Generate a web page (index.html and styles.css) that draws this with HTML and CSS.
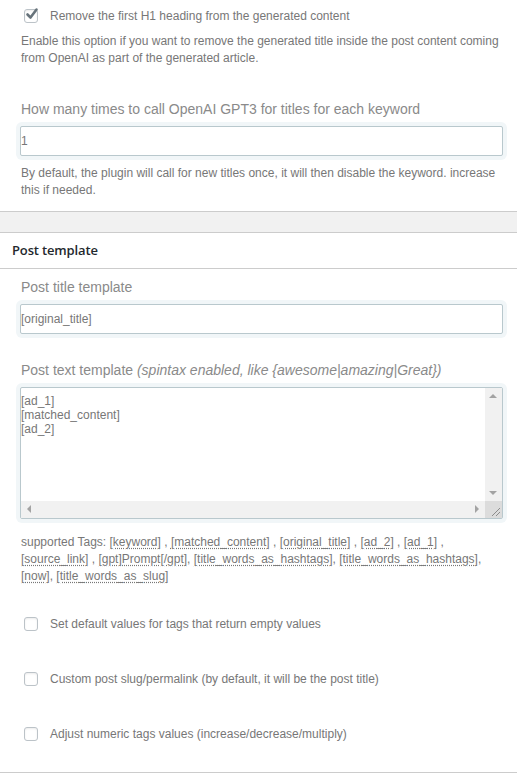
FILE: index.html
```html
<!DOCTYPE html>
<html>
<head>
<meta charset="utf-8">
<link rel="stylesheet" href="styles.css">
</head>
<body>
<div class="section top">
  <label class="check-row">
    <span class="cb checked"><svg viewBox="0 0 14 14" width="14" height="14"><path d="M2.5 7.5 L5.5 10.5 L11.5 2.5" fill="none" stroke="#67737b" stroke-width="2.6" stroke-linecap="round" stroke-linejoin="round"/></svg></span>
    <span class="cb-label">Remove the first H1 heading from the generated content</span>
  </label>
  <p class="desc">Enable this option if you want to remove the generated title inside the post content coming from OpenAI as part of the generated article.</p>

  <div class="field first-field">
    <div class="field-label">How many times to call OpenAI GPT3 for titles for each keyword</div>
    <div class="glow"><div class="input">1</div></div>
    <p class="desc">By default, the plugin will call for new titles once, it will then disable the keyword. increase this if needed.</p>
  </div>
</div>

<div class="band"></div>
<div class="header">Post template</div>

<div class="section">
  <div class="field title-field">
    <div class="field-label">Post title template</div>
    <div class="glow"><div class="input">[original_title]</div></div>
  </div>

  <div class="field text-field">
    <div class="field-label">Post text template <em>(spintax enabled, like {awesome|amazing|Great})</em></div>
    <div class="glow">
      <div class="textarea">
        <div class="ta-content">[ad_1]<br>[matched_content]<br>[ad_2]</div>
        <div class="vscroll">
          <span class="arr up"></span>
          <span class="arr down"></span>
        </div>
        <div class="hscroll">
          <span class="arr left"></span>
          <span class="arr right"></span>
        </div>
        <div class="corner"><svg viewBox="0 0 17 17" width="17" height="17"><path d="M15 7 L7 15 M15 11 L11 15" stroke="#8c8c8c" stroke-width="1" fill="none"/></svg></div>
      </div>
    </div>
    <p class="desc tags">supported Tags: <u>[keyword]</u> , <u>[matched_content]</u> , <u>[original_title]</u> , <u>[ad_2]</u> , <u>[ad_1]</u> , <u>[source_link]</u> , <u>[gpt]Prompt[/gpt]</u>, <u>[title_words_as_hashtags]</u>, <u>[title_words_as_hashtags]</u>, <u>[now]</u>, <u>[title_words_as_slug]</u></p>
  </div>

  <div class="options">
    <label class="check-row"><span class="cb"></span><span class="cb-label">Set default values for tags that return empty values</span></label>
    <label class="check-row"><span class="cb"></span><span class="cb-label">Custom post slug/permalink (by default, it will be the post title)</span></label>
    <label class="check-row"><span class="cb"></span><span class="cb-label">Adjust numeric tags values (increase/decrease/multiply)</span></label>
  </div>
</div>
<div class="bottom-line"></div>
</body>
</html>
```

FILE: styles.css
```css
html, body {
  margin: 0;
  padding: 0;
  background: #fff;
}
body {
  font-family: "Liberation Sans", Arial, sans-serif;
  color: #777;
  width: 517px;
  height: 775px;
  overflow: hidden;
  position: relative;
}
.section {
  padding: 0 15px 0 21px;
}
.top {
  padding-top: 8px;
}
.check-row {
  display: flex;
  align-items: center;
  gap: 12px;
  padding-left: 3px;
  height: 15px;
}
.cb {
  width: 12px;
  height: 12px;
  border: 1px solid #bcc3c8;
  border-radius: 3px;
  background: #fff;
  box-shadow: inset 0 1px 2px rgba(0,0,0,0.08);
  position: relative;
  flex: none;
}
.cb svg {
  position: absolute;
  left: 0px;
  top: -3px;
}
.cb-label {
  font-size: 12px;
  color: #777;
  padding-top: 1px;
}
.desc {
  margin: 0;
  font-size: 12px;
  line-height: 17px;
  color: #777;
}
.top .desc {
  margin-top: 10px;
}
.field-label {
  font-size: 14px;
  color: #8a8a8a;
  line-height: 18px;
  margin-bottom: 4px;
}
.field-label em {
  font-style: italic;
}
.first-field {
  margin-top: 33px;
}
.first-field .desc {
  margin-top: 5px;
}
.glow {
  margin-left: -5px;
  margin-right: -5px;
  padding: 4px;
  border-radius: 6px;
  background: #f1f6f8;
}
.input {
  height: 28px;
  border: 1px solid #b9c8cd;
  border-radius: 2px;
  background: #fff;
  font-size: 12px;
  line-height: 28px;
  color: #777;
  padding-left: 0;
}
.band {
  margin-top: 12px;
  height: 20px;
  border-top: 1px solid #ccc;
  border-bottom: 1px solid #ccc;
  background: #f1f1f1;
}
.header {
  height: 35px;
  line-height: 35px;
  padding-left: 12px;
  font-family: "Open Sans", "Noto Sans", sans-serif;
  font-weight: 600;
  font-size: 13px;
  letter-spacing: -0.15px;
  color: #23282d;
  border-bottom: 1px solid #ccc;
}
.title-field {
  margin-top: 9px;
}
.text-field {
  margin-top: 23px;
}
.textarea {
  border: 1px solid #b9c8cd;
  border-radius: 2px;
  background: #fff;
  height: 130px;
  display: grid;
  grid-template-columns: 1fr 17px;
  grid-template-rows: 1fr 17px;
}
.ta-content {
  font-size: 12px;
  line-height: 14px;
  color: #777;
  padding-top: 6px;
}
.vscroll {
  background: #f1f1f1;
  position: relative;
}
.hscroll {
  background: #f1f1f1;
  position: relative;
}
.corner {
  background: #dcdcdc;
}
.corner svg {
  display: block;
}
.arr {
  position: absolute;
  width: 0;
  height: 0;
}
.arr.up {
  top: 6px;
  left: 4px;
  border-left: 4px solid transparent;
  border-right: 4px solid transparent;
  border-bottom: 4px solid #a3a3a3;
}
.arr.down {
  bottom: 6px;
  left: 4px;
  border-left: 4px solid transparent;
  border-right: 4px solid transparent;
  border-top: 4px solid #a3a3a3;
}
.arr.left {
  left: 6px;
  top: 4px;
  border-top: 4px solid transparent;
  border-bottom: 4px solid transparent;
  border-right: 4px solid #a3a3a3;
}
.arr.right {
  right: 6px;
  top: 4px;
  border-top: 4px solid transparent;
  border-bottom: 4px solid transparent;
  border-left: 4px solid #a3a3a3;
}
.tags {
  margin-top: 11px;
}
.tags u {
  text-decoration: underline dotted;
  text-underline-offset: 2px;
}
.options {
  margin-top: 31px;
  display: flex;
  flex-direction: column;
  gap: 40px;
}
.bottom-line {
  position: absolute;
  left: 0;
  right: 0;
  top: 772px;
  border-top: 1px solid #ccc;
}
```
